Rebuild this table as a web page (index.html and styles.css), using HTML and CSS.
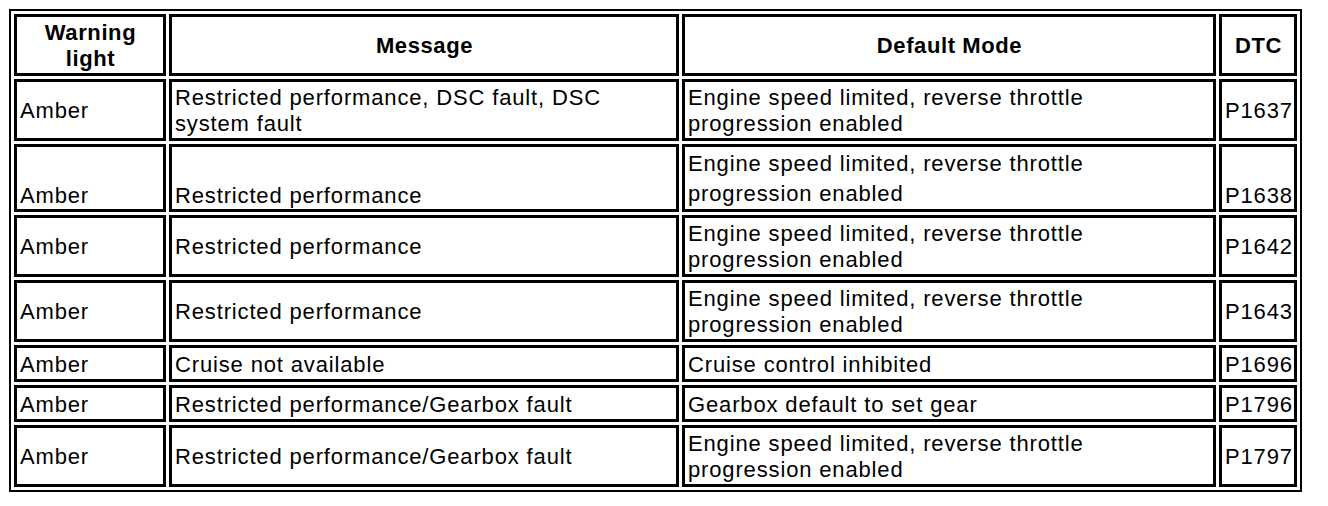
FILE: index.html
```html
<!DOCTYPE html>
<html>
<head>
<meta charset="utf-8">
<link rel="stylesheet" href="styles.css">
</head>
<body>
<table class="dtc-table">
  <colgroup>
    <col class="c-light">
    <col class="c-msg">
    <col class="c-mode">
    <col class="c-dtc">
  </colgroup>
  <tr class="r2">
    <th>Warning<br>light</th>
    <th>Message</th>
    <th>Default Mode</th>
    <th>DTC</th>
  </tr>
  <tr class="r2">
    <td>Amber</td>
    <td>Restricted performance, DSC fault, DSC<br>system fault</td>
    <td>Engine speed limited, reverse throttle<br>progression enabled</td>
    <td>P1637</td>
  </tr>
  <tr class="r3">
    <td class="bottom">Amber</td>
    <td class="bottom">Restricted performance</td>
    <td class="tall">Engine speed limited, reverse throttle<br>progression enabled</td>
    <td class="bottom">P1638</td>
  </tr>
  <tr class="r2">
    <td>Amber</td>
    <td>Restricted performance</td>
    <td>Engine speed limited, reverse throttle<br>progression enabled</td>
    <td>P1642</td>
  </tr>
  <tr class="r2">
    <td>Amber</td>
    <td>Restricted performance</td>
    <td>Engine speed limited, reverse throttle<br>progression enabled</td>
    <td>P1643</td>
  </tr>
  <tr class="r1">
    <td>Amber</td>
    <td>Cruise not available</td>
    <td>Cruise control inhibited</td>
    <td>P1696</td>
  </tr>
  <tr class="r1">
    <td>Amber</td>
    <td>Restricted performance/Gearbox fault</td>
    <td>Gearbox default to set gear</td>
    <td>P1796</td>
  </tr>
  <tr class="r2">
    <td>Amber</td>
    <td>Restricted performance/Gearbox fault</td>
    <td>Engine speed limited, reverse throttle<br>progression enabled</td>
    <td>P1797</td>
  </tr>
</table>
</body>
</html>
```

FILE: styles.css
```css
html, body {
  margin: 0;
  padding: 0;
  background: #ffffff;
}

body {
  padding: 9px 0 0 9px;
  font-family: "Liberation Sans", Arial, sans-serif;
  color: #000000;
}

.dtc-table {
  table-layout: fixed;
  width: 1293px;
  border: 2px solid #000;
  border-collapse: separate;
  border-spacing: 3px;
  font-size: 22px;
  line-height: 26px;
  letter-spacing: 0.85px;
}

.c-light { width: 152px; }
.c-msg { width: 510px; }
.c-mode { width: 534px; }
.c-dtc { width: 78px; }

.dtc-table th,
.dtc-table td {
  border: 3px solid #000;
  padding: 2px 2px 0 3px;
  vertical-align: middle;
  white-space: nowrap;
  overflow: hidden;
}

.dtc-table th {
  font-weight: bold;
  text-align: center;
  letter-spacing: 0.6px;
}

.dtc-table td {
  text-align: left;
  font-weight: normal;
}

.r2 { height: 62px; }
.r1 { height: 37px; }
.r3 { height: 68px; }

.dtc-table td.bottom {
  vertical-align: bottom;
  padding-bottom: 0;
}

.dtc-table td.tall {
  line-height: 30px;
  vertical-align: top;
  padding-top: 2px;
}
```
